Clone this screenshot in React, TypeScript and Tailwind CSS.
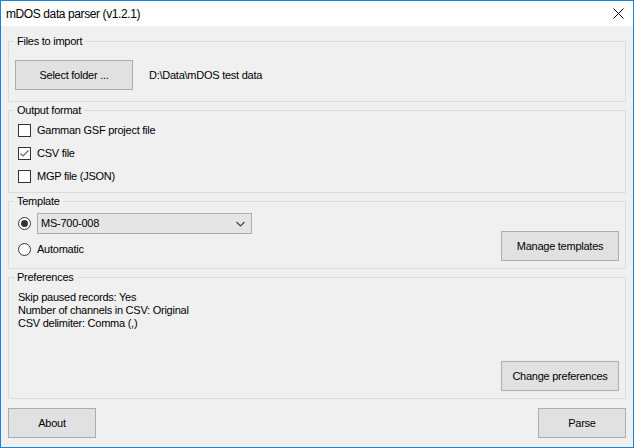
import React from 'react';

const Button = ({ label, className = '' }: { label: string; className?: string }) => (
  <button className={`h-[30px] border border-[#adadad] bg-[#e1e1e1] text-black leading-none ${className}`}>
    {label}
  </button>
);

const Group = ({ title, className, children }: { title: string; className: string; children: React.ReactNode }) => (
  <fieldset className={`border border-[#dcdcdc] ${className}`}>
    <legend className="ml-[5px] px-[3px] leading-[15px]">{title}</legend>
    {children}
  </fieldset>
);

const Checkbox = ({ label, checked = false }: { label: string; checked?: boolean }) => (
  <div className="h-[23px] flex items-center">
    <span className="w-[13px] h-[13px] border border-[#333333] bg-white flex items-center justify-center">
      {checked && (
        <svg width="11" height="11" viewBox="0 0 11 11">
          <path d="M1.5 5.5 L4 8 L9.5 2.5" fill="none" stroke="#666666" strokeWidth="1.2" />
        </svg>
      )}
    </span>
    <span className="ml-[6px]">{label}</span>
  </div>
);

const Radio = ({ checked = false }: { checked?: boolean }) => (
  <span className="w-[13px] h-[13px] rounded-full border border-[#333333] bg-white flex items-center justify-center shrink-0">
    {checked && <span className="w-[7px] h-[7px] rounded-full bg-[#333333]" />}
  </span>
);

export default function App() {
  return (
    <div className="w-[634px] h-[448px] border border-[#1883d7] bg-[#f0f0f0] flex flex-col font-['Liberation_Sans',Arial,sans-serif] text-[11px] tracking-[-0.25px] text-black">
      {/* title bar */}
      <div className="h-[25px] bg-white flex items-center justify-between pl-[5px] pr-[9px] shrink-0">
        <span className="text-[12px] tracking-[-0.4px]">mDOS data parser (v1.2.1)</span>
        <svg width="11" height="11" viewBox="0 0 11 11">
          <path d="M0.5 0.5 L10.5 10.5 M10.5 0.5 L0.5 10.5" stroke="#000" strokeWidth="1" />
        </svg>
      </div>

      <div className="flex-1 flex flex-col px-[7px] pt-[8px] pb-[9px]">
        <div className="flex flex-col gap-[1px]">
          <Group title="Files to import" className="h-[68px]">
            <div className="flex items-center pl-[6px] pt-[11px]">
              <Button label="Select folder ..." className="w-[118px]" />
              <span className="ml-[16px]">D:\Data\mDOS test data</span>
            </div>
          </Group>

          <Group title="Output format" className="h-[90px]">
            <div className="pl-[9px] pt-[1px]">
              <Checkbox label="Gamman GSF project file" />
              <Checkbox label="CSV file" checked />
              <Checkbox label="MGP file (JSON)" />
            </div>
          </Group>

          <Group title="Template" className="h-[75px]">
            <div className="h-[59px] flex justify-between">
              <div className="pl-[9px] pt-[4px] flex flex-col">
                <div className="h-[21px] flex items-center">
                  <Radio checked />
                  <div className="ml-[6px] w-[215px] h-[21px] border border-[#acacac] bg-[#e5e5e5] flex items-center justify-between pl-[3px] pr-[6px]">
                    <span>MS-700-008</span>
                    <svg width="9" height="6" viewBox="0 0 9 6">
                      <path d="M0.5 1 L4.5 5 L8.5 1" fill="none" stroke="#444" strokeWidth="1.2" />
                    </svg>
                  </div>
                </div>
                <div className="mt-[9px] h-[13px] flex items-center">
                  <Radio />
                  <span className="ml-[6px]">Automatic</span>
                </div>
              </div>
              <Button label="Manage templates" className="w-[118px] self-end mb-[7px] mr-[6px]" />
            </div>
          </Group>

          <Group title="Preferences" className="h-[129px]">
            <div className="h-[113px] flex justify-between">
              <div className="pl-[9px] pt-[6px] leading-[13px]">
                <div>Skip paused records: Yes</div>
                <div>Number of channels in CSV: Original</div>
                <div>CSV delimiter: Comma (,)</div>
              </div>
              <Button label="Change preferences" className="w-[118px] self-end mb-[7px] mr-[6px]" />
            </div>
          </Group>
        </div>

        <div className="mt-[9px] flex justify-between">
          <Button label="About" className="w-[88px]" />
          <Button label="Parse" className="w-[88px]" />
        </div>
      </div>
    </div>
  );
}
